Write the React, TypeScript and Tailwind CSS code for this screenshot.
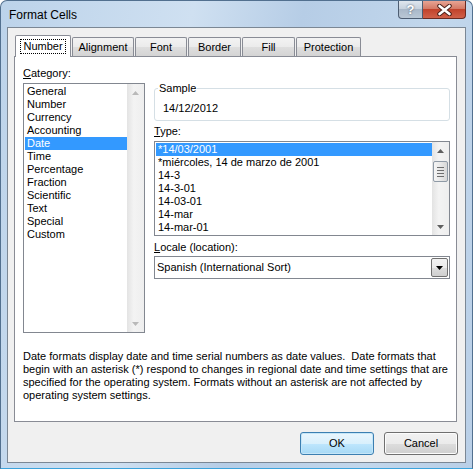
import React from "react";

const categories = [
  "General",
  "Number",
  "Currency",
  "Accounting",
  "Date",
  "Time",
  "Percentage",
  "Fraction",
  "Scientific",
  "Text",
  "Special",
  "Custom",
];

const types = [
  "*14/03/2001",
  "*miércoles, 14 de marzo de 2001",
  "14-3",
  "14-3-01",
  "14-03-01",
  "14-mar",
  "14-mar-01",
];

const tabs = [
  { label: "Number", width: "w-[56px]" },
  { label: "Alignment", width: "w-[62px]" },
  { label: "Font", width: "w-[52px]" },
  { label: "Border", width: "w-[53px]" },
  { label: "Fill", width: "w-[53px]" },
  { label: "Protection", width: "w-[65px]" },
];

const Arrow = ({ down, disabled }: { down?: boolean; disabled?: boolean }) => (
  <svg width="7" height="4" viewBox="0 0 7 4">
    <path
      d={down ? "M0 0 L7 0 L3.5 4 Z" : "M0 4 L7 4 L3.5 0 Z"}
      fill={disabled ? "#b9b9b9" : "#5f5f5f"}
    />
  </svg>
);

const ScrollBar = ({ thumb, disabled }: { thumb?: boolean; disabled?: boolean }) => (
  <div className="flex w-[17px] flex-col bg-[linear-gradient(90deg,#e3e3e3,#f3f3f3_40%,#eeeeee)]">
    <div className="flex h-[17px] items-center justify-center">
      <Arrow disabled={disabled} />
    </div>
    <div className="flex-1 px-[1px] pt-[2px]">
      {thumb && (
        <div className="flex h-[21px] flex-col items-center justify-center gap-[2px] rounded-[2px] border border-[#8f9aa6] bg-[linear-gradient(90deg,#f5f5f5,#e8e8e8_50%,#d7d7d7)]">
          <div className="h-px w-[7px] bg-[#6d6d6d]" />
          <div className="h-px w-[7px] bg-[#6d6d6d]" />
          <div className="h-px w-[7px] bg-[#6d6d6d]" />
          <div className="h-px w-[7px] bg-[#6d6d6d]" />
        </div>
      )}
    </div>
    <div className="flex h-[17px] items-center justify-center">
      <Arrow down disabled={disabled} />
    </div>
  </div>
);

const ListRow = ({ text, selected }: { text: string; selected?: boolean }) => (
  <div
    className={`h-[13px] whitespace-nowrap pl-[2px] leading-[13px] ${
      selected ? "bg-[#3399ff] text-white" : "text-black"
    }`}
  >
    {text}
  </div>
);

const DialogButton = ({ label, primary }: { label: string; primary?: boolean }) => (
  <button
    className={`h-[23px] w-[74px] rounded-[3px] border text-[11px] text-black ${
      primary
        ? "border-[#3c7fb1] bg-[linear-gradient(180deg,#eaf6fd,#d9f0fc_50%,#bee6fd_51%,#a7d9f5)] shadow-[inset_0_0_0_1px_#c5e6f8]"
        : "border-[#707070] bg-[linear-gradient(180deg,#f2f2f2,#ebebeb_50%,#dddddd_51%,#cfcfcf)] shadow-[inset_0_0_0_1px_#fcfcfc]"
    }`}
  >
    {label}
  </button>
);

const App = () => {
  return (
    <div className="flex h-[469px] w-[473px] flex-col rounded-t-[7px] border border-[#52708f] border-b-[#3ba3dc] bg-[linear-gradient(100deg,#bcd3ea_0%,#cfe0f1_35%,#b6cde6_55%,#c2d7ec_80%,#b9cfe7_100%)] font-['Liberation_Sans',Arial,sans-serif] text-[11px] text-black">
      {/* title bar */}
      <div className="flex h-[26px] items-start">
        <span className="pl-[8px] pt-[7px] text-[12px] leading-[14px]">Format Cells</span>
        <div className="mr-[6px] ml-auto flex">
          <div className="flex h-[18px] w-[25px] items-center justify-center rounded-bl-[4px] border border-t-0 border-[#4d5d72] bg-[linear-gradient(180deg,#dfe6ee,#c7d2de_45%,#a9b8c9_50%,#bac8d6)] text-[13px] font-bold leading-none text-white [text-shadow:0_0_2px_#39485a]">
            ?
          </div>
          <div className="flex h-[18px] w-[43px] items-center justify-center rounded-br-[4px] border border-t-0 border-l-0 border-[#6a2a22] bg-[linear-gradient(180deg,#e8a493,#d47a66_45%,#c2432c_50%,#d0614a)]">
            <svg width="15" height="12" viewBox="0 0 15 12">
              <path d="M2.5 2 L12.5 10 M12.5 2 L2.5 10" stroke="#4a1f19" strokeWidth="4.5" strokeLinecap="round" />
              <path d="M2.5 2 L12.5 10 M12.5 2 L2.5 10" stroke="#ffffff" strokeWidth="2.6" strokeLinecap="round" />
            </svg>
          </div>
        </div>
      </div>

      {/* client area */}
      <div className="mx-[6px] mb-[5px] flex flex-1 flex-col border border-[#7b8794] bg-[#f0f0f0] pt-[7px]">
        {/* tabs */}
        <div className="relative z-10 -mb-px flex h-[22px] items-end gap-[1px] pl-[7px]">
          {tabs.map((tab, i) =>
            i === 0 ? (
              <div
                key={tab.label}
                className={`${tab.width} flex h-[22px] items-center justify-center rounded-t-[2px] border border-b-0 border-[#898c95] bg-white pb-[1px]`}
              >
                <span className="border border-dotted border-black px-[2px] leading-[13px]">
                  {tab.label}
                </span>
              </div>
            ) : (
              <div
                key={tab.label}
                className={`${tab.width} mb-[1px] flex h-[19px] items-center justify-center rounded-t-[2px] border border-b-0 border-[#898c95] bg-[linear-gradient(180deg,#f3f3f3,#ebebeb_50%,#dedede_51%,#d4d4d4)] pt-[1px]`}
              >
                {tab.label}
              </div>
            )
          )}
        </div>

        {/* panel */}
        <div className="ml-[6px] flex h-[366px] w-[443px] flex-col border border-[#898c95] bg-white">
          <div className="flex items-start pt-[10px]">
            {/* category */}
            <div className="ml-[8px] flex w-[122px] flex-col">
              <div className="mb-[3px] leading-[13px]">
                <span className="underline">C</span>ategory:
              </div>
              <div className="flex h-[250px] border border-[#828790] bg-white">
                <div className="flex-1 pt-px pl-px">
                  {categories.map((c) => (
                    <ListRow key={c} text={c} selected={c === "Date"} />
                  ))}
                </div>
                <ScrollBar disabled />
              </div>
            </div>

            {/* right side */}
            <div className="ml-[9px] mt-[15px] flex w-[296px] flex-col">
              <fieldset className="h-[39px] rounded-[3px] border border-[#d5dfe5] pl-[3px]">
                <legend className="px-[1px] leading-[13px]">Sample</legend>
                <div className="pl-[5px] pt-[7px] leading-[13px]">14/12/2012</div>
              </fieldset>

              <div className="mt-[4px] mb-[3px] leading-[13px]">
                <span className="underline">T</span>ype:
              </div>
              <div className="flex h-[95px] border border-[#828790] bg-white">
                <div className="flex-1 pt-px pl-px">
                  {types.map((t, i) => (
                    <ListRow key={t} text={t} selected={i === 0} />
                  ))}
                </div>
                <ScrollBar thumb />
              </div>

              <div className="mt-[5px] mb-[2px] leading-[13px]">
                <span className="underline">L</span>ocale (location):
              </div>
              <div className="flex h-[23px] items-center border border-[#828790] bg-white">
                <span className="flex-1 pl-[2px] leading-[13px]">Spanish (International Sort)</span>
                <div className="mr-px flex h-[19px] w-[17px] items-center justify-center rounded-[2px] border border-[#707070] bg-[linear-gradient(180deg,#f2f2f2,#ebebeb_50%,#dddddd_51%,#cfcfcf)]">
                  <svg width="7" height="4" viewBox="0 0 7 4">
                    <path d="M0 0 L7 0 L3.5 4 Z" fill="#000000" />
                  </svg>
                </div>
              </div>
            </div>
          </div>

          <p className="mt-[17px] pl-[8px] leading-[13px]">
            Date formats display date and time serial numbers as date values.&nbsp; Date formats that
            <br />
            begin with an asterisk (*) respond to changes in regional date and time settings that are
            <br />
            specified for the operating system. Formats without an asterisk are not affected by
            <br />
            operating system settings.
          </p>
        </div>

        {/* buttons */}
        <div className="mt-[10px] mr-[7px] flex justify-end gap-[10px]">
          <DialogButton label="OK" primary />
          <DialogButton label="Cancel" />
        </div>
      </div>
    </div>
  );
};

export default App;
